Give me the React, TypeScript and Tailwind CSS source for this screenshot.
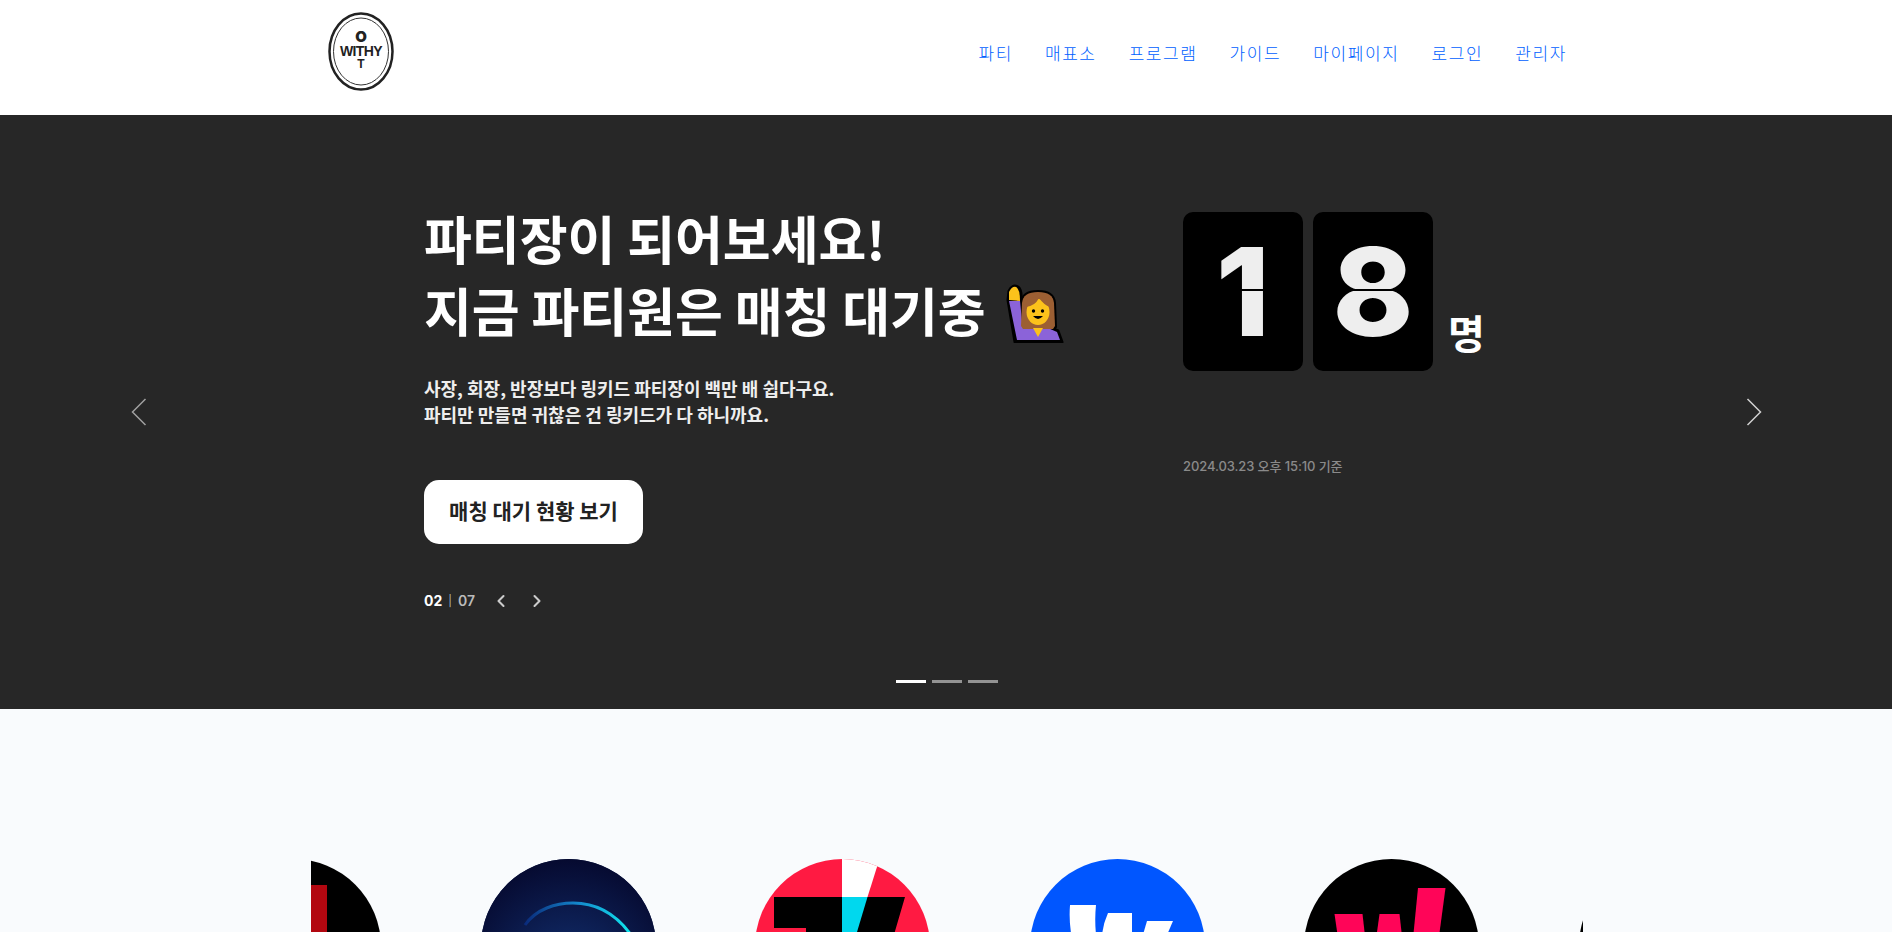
import React from 'react';
import { ChevronLeft, ChevronRight } from 'lucide-react';

const navItems = ['파티', '매표소', '프로그램', '가이드', '마이페이지', '로그인', '관리자'];

const Logo = () => (
  <div className="relative mb-[12px] w-[66px] h-[79px] flex flex-col items-center justify-center pb-[4px]">
    <svg className="absolute inset-0" width="66" height="79" viewBox="0 0 66 79" fill="none">
      <ellipse cx="33" cy="39.5" rx="31.5" ry="38" stroke="#222" strokeWidth="2.5" />
      <ellipse cx="33" cy="39.5" rx="27.5" ry="33.5" stroke="#333" strokeWidth="1" />
    </svg>
    <span className="font-['Inter',sans-serif] font-black text-[15px] leading-[15px] text-[#222]">O</span>
    <span className="font-['Liberation_Sans',sans-serif] font-bold text-[14px] leading-[15px] tracking-[-0.6px] text-[#222]">WITHY</span>
    <span className="font-['Liberation_Sans',sans-serif] font-bold text-[12px] leading-[11px] text-[#222]">T</span>
  </div>
);

const RaisedHandEmoji = () => (
  <svg className="ml-[18px] mt-[6px]" width="60" height="60" viewBox="0 0 60 60">
    <path d="M4 17 L5 8 Q8 1 14 4 Q18 7 17 18 L18 36 L24 44 L44 44 L54 48 L58 59 L11 59 Z" fill="#000" stroke="#000" strokeWidth="3" strokeLinejoin="round" />
    <path d="M17 20 Q18 8 34 8 Q50 8 51 20 L52 44 L50 47 L18 47 L16 44 Z" fill="#000" stroke="#000" strokeWidth="2" />
    <path d="M5 17 L5 9 Q8 3 12 4 Q16 6 16 18 Z" fill="#fcc21b" />
    <path d="M5 18 L16 18 L18 38 L24 45 L44 45 L53 49 L56 57 L13 57 Z" fill="#8b63d9" />
    <path d="M18 20 Q19 9 34 9 Q49 9 50 20 L51 43 L49 46 L19 46 L17 43 Z" fill="#9c5f33" />
    <ellipse cx="34" cy="29" rx="11.5" ry="13" fill="#fcc21b" />
    <path d="M22 24 Q31 23 35 15 Q40 22 46 24 L46 15 L24 14 Z" fill="#9c5f33" />
    <circle cx="29.5" cy="28" r="1.7" fill="#000" />
    <circle cx="38.5" cy="28" r="1.7" fill="#000" />
    <path d="M29 33 Q34 39 39 33 Z" fill="#000" />
    <path d="M29 45 L39 45 L34 54 Z" fill="#fcc21b" />
  </svg>
);

const FlipCard = ({ digit }: { digit: string }) => (
  <div className="relative w-[120px] h-[159px] rounded-[10px] bg-black flex items-center justify-center">
    <span className="font-['Inter',sans-serif] font-extrabold text-[122px] leading-none text-[#eeeeee]">{digit}</span>
    <div className="absolute left-0 right-0 top-[77px] h-[2px] bg-black" />
  </div>
);

const Circle = ({ children, bg }: { children?: React.ReactNode; bg: string }) => (
  <div className={`relative flex-none w-[175px] h-[175px] rounded-full overflow-hidden ${bg}`}>
    <svg className="absolute inset-0" width="175" height="175" viewBox="0 0 175 175">
      {children}
    </svg>
  </div>
);

export default function App() {
  return (
    <div className="h-[932px] overflow-hidden bg-[#f9fbfd] font-['Noto_Sans_CJK_KR','Noto_Sans',sans-serif]">
      <header className="h-[115px] bg-white">
        <div className="w-[1270px] mx-auto h-full flex items-center justify-between pl-[17px] pr-[14px]">
          <Logo />
          <nav className="flex items-center gap-[32px] pb-[9px]">
            {navItems.map((item) => (
              <a key={item} className="text-[17px] font-light tracking-[1.6px] text-[#0060ff]">
                {item}
              </a>
            ))}
          </nav>
        </div>
      </header>

      <section className="relative h-[594px] bg-[#272727] text-white">
        <div className="w-[1044px] mx-auto flex">
          <div className="w-[759px] flex-none pt-[87px]">
            <h1 className="font-bold text-[52px] leading-[72px] text-white">
              <div>파티장이 되어보세요!</div>
              <div className="flex items-center">지금 파티원은 매칭 대기중<RaisedHandEmoji /></div>
            </h1>
            <p className="mt-[29px] font-semibold text-[18px] leading-[26px] text-[#eeeeee]">
              사장, 회장, 반장보다 링키드 파티장이 백만 배 쉽다구요.
              <br />
              파티만 만들면 귀찮은 건 링키드가 다 하니까요.
            </p>
            <button className="mt-[53px] w-[219px] h-[64px] pb-[2px] rounded-[15px] bg-white font-bold text-[21px] text-[#222222]">
              매칭 대기 현황 보기
            </button>
            <div className="mt-[47px] flex items-center font-['Inter',sans-serif] text-[14px] leading-[20px] h-[20px]">
              <span className="font-bold text-white">02</span>
              <span className="mx-[6px] text-[11px] text-[#bbbbbb]">|</span>
              <span className="font-semibold text-[#bbbbbb]">07</span>
              <ChevronLeft className="ml-[16px] text-[#cccccc]" size={20} strokeWidth={2.5} />
              <ChevronRight className="ml-[16px] text-[#cccccc]" size={20} strokeWidth={2.5} />
            </div>
          </div>
          <div className="pt-[97px]">
            <div className="flex items-end gap-[10px]">
              <FlipCard digit="1" />
              <FlipCard digit="8" />
              <span className="ml-[5px] mb-[15px] font-bold text-[40px] leading-[48px] text-white">명</span>
            </div>
            <p className="mt-[85px] font-['Inter','Noto_Sans_CJK_KR',sans-serif] font-medium text-[13px] leading-[21px] tracking-[-0.1px] text-[#8a8a8a]">
              2024.03.23 오후 15:10 기준
            </p>
          </div>
        </div>

        <svg className="absolute left-[131px] top-[283px]" width="16" height="28" viewBox="0 0 16 28" fill="none">
          <path d="M14.5 1 L1.5 14 L14.5 27" stroke="#a0a0a0" strokeWidth="1.5" />
        </svg>
        <svg className="absolute right-[130px] top-[283px]" width="16" height="28" viewBox="0 0 16 28" fill="none">
          <path d="M1.5 1 L14.5 14 L1.5 27" stroke="#d0d0d0" strokeWidth="1.5" />
        </svg>

        <div className="absolute left-0 right-0 top-[565px] flex justify-center gap-[6px] pl-[2px]">
          <div className="w-[30px] h-[3px] bg-white" />
          <div className="w-[30px] h-[3px] bg-[#939393]" />
          <div className="w-[30px] h-[3px] bg-[#939393]" />
        </div>
      </section>

      <section className="w-[1272px] ml-[311px] overflow-hidden pt-[150px]">
        <div className="flex gap-[99.5px] ml-[-105px]">
          <Circle bg="bg-black">
            <rect x="105" y="26" width="16" height="149" fill="#b20710" />
          </Circle>
          <Circle bg="bg-[#0a1a4a]">
            <defs>
              <radialGradient id="dp" cx="50%" cy="65%" r="65%">
                <stop offset="0%" stopColor="#123070" />
                <stop offset="100%" stopColor="#060a30" />
              </radialGradient>
              <linearGradient id="arc" x1="0" x2="1" y1="0" y2="0">
                <stop offset="0%" stopColor="#0a2a7a" />
                <stop offset="50%" stopColor="#1488cc" />
                <stop offset="100%" stopColor="#10e8ee" />
              </linearGradient>
            </defs>
            <rect width="175" height="175" fill="url(#dp)" />
            <path d="M44 66 C55 50 75 44 92 44 C115 44 135 55 150 76" fill="none" stroke="url(#arc)" strokeWidth="3" />
          </Circle>
          <Circle bg="bg-[#ff1a42]">
            <path d="M87 0 L124.5 0 L112.5 38 L87 38 Z" fill="#ffffff" />
            <path d="M19 38 L150 38 L110 175 L51 175 L51 69 L19 69 Z" fill="#000000" />
            <path d="M87 38 L112.5 38 L87 123 Z" fill="#00d8ee" />
          </Circle>
          <Circle bg="bg-[#0056ff]">
            <path d="M40 46 L66 46 Q63 75 72 105 L58 120 Q37 85 40 46 Z" fill="#fff" />
            <path d="M78 54 L102 54 L102 110 L88 120 Q62 90 78 54 Z" fill="#fff" />
            <path d="M117 62 L143 62 L118 120 L100 120 Z" fill="#fff" />
          </Circle>
          <Circle bg="bg-black">
            <path d="M30.5 55 L58.5 55 L66 120 L40 120 Z" fill="#ff0558" />
            <path d="M75.5 55 L95.5 55 L100 95 L70 95 Z" fill="#ff0558" />
            <path d="M114 29 L141.5 29 L128 130 L104 130 Z" fill="#ff0558" />
          </Circle>
          <Circle bg="bg-black" />
        </div>
      </section>
    </div>
  );
}
